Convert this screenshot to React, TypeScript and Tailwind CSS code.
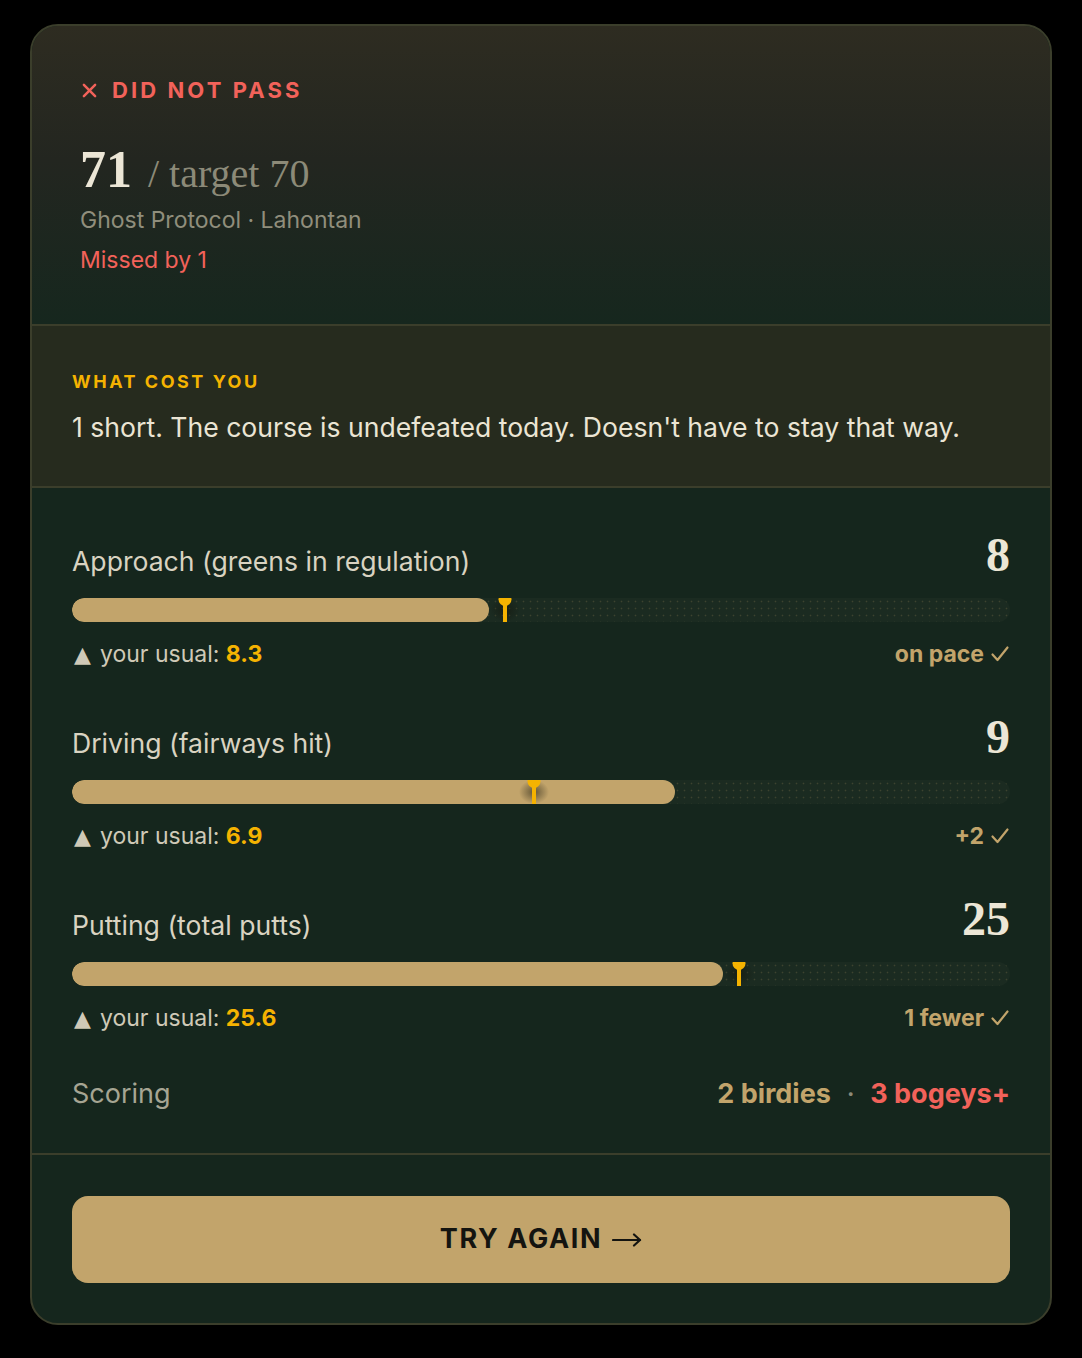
import React from "react";

const sans = { fontFamily: "Inter, 'Noto Sans', sans-serif" };
const serif = { fontFamily: "'Liberation Serif', 'DejaVu Serif', serif" };

function Check({ className = "" }: { className?: string }) {
  return (
    <svg viewBox="0 0 20 20" className={className} fill="none" stroke="currentColor" strokeWidth="2.2" strokeLinecap="round" strokeLinejoin="round">
      <polyline points="2.5,10.5 7.5,16 17.5,3.5" />
    </svg>
  );
}

type Stat = {
  label: string;
  value: number;
  max: number;
  usual: number;
  usualText: string;
  right: string;
};

const stats: Stat[] = [
  { label: "Approach (greens in regulation)", value: 8, max: 18, usual: 8.3, usualText: "8.3", right: "on pace" },
  { label: "Driving (fairways hit)", value: 9, max: 14, usual: 6.9, usualText: "6.9", right: "+2" },
  { label: "Putting (total putts)", value: 25, max: 36, usual: 25.6, usualText: "25.6", right: "1 fewer" },
];

function StatRow({ s }: { s: Stat }) {
  const fill = (s.value / s.max) * 100;
  const mark = (s.usual / s.max) * 100;
  return (
    <div className="flex flex-col">
      <div className="flex items-baseline justify-between h-[50px]">
        <span className="text-[26.6px] text-[#d9d3c1] leading-[36px]">{s.label}</span>
        <span className="text-[48px] leading-[50px] font-bold text-[#ece6d6]" style={serif}>{s.value}</span>
      </div>
      <div className="relative mt-[18px] h-[24px] rounded-full overflow-hidden bg-[#1b2b21] bg-[radial-gradient(circle,rgba(194,164,107,0.2)_0.7px,transparent_1.1px)] bg-[length:7px_7px]">
        <div className="absolute left-0 top-0 h-full rounded-full bg-[#c2a46b]" style={{ width: `${fill}%` }} />
        <div className="absolute top-0 h-full w-[14px] -ml-[7px]" style={{ left: `${mark}%` }}>
          <div className="absolute inset-y-0 -left-[8px] -right-[8px] bg-[radial-gradient(closest-side,rgba(20,20,10,0.55),transparent)]" />
          <div className="absolute left-1/2 -translate-x-1/2 -top-[5px] w-[13px] h-[13px] rounded-full bg-[#f5b301]" />
          <div className="absolute left-1/2 -translate-x-1/2 top-0 bottom-0 w-[4px] bg-[#f5b301]" />
        </div>
      </div>
      <div className="mt-[18px] h-[28px] flex items-center justify-between text-[23px]">
        <span className="flex items-center text-[#cfc9b7]">
          <span className="text-[22px] mr-[9px] ml-[2px]" style={{ fontFamily: "'DejaVu Sans', sans-serif" }}>▲</span>
          <span>your usual:&nbsp;<span className="font-bold text-[#f5b301]">{s.usualText}</span></span>
        </span>
        <span className="flex items-center gap-[6px] font-bold text-[#c2a46b]">
          {s.right}
          <Check className="w-[20px] h-[20px]" />
        </span>
      </div>
    </div>
  );
}

export default function App() {
  return (
    <div className="min-h-[1358px] w-full bg-black flex justify-center pt-[24px] pb-[33px]" style={sans}>
      <div className="w-[1022px] rounded-[28px] border-2 border-[#3b3e2b] overflow-hidden bg-[#15261d]">
        {/* header */}
        <div className="bg-[linear-gradient(180deg,#2e2c21_0%,#232620_45%,#16271e_100%)] pl-[48px] pt-[50px] pb-[49px]">
          <div className="h-[28px] flex items-center text-[22px] font-bold tracking-[0.14em] text-[#f2625a]">
            <svg viewBox="0 0 16 16" className="w-[15px] h-[15px] mr-[15px] ml-[2px]" fill="none" stroke="currentColor" strokeWidth="2.6" strokeLinecap="round">
              <line x1="2" y1="2" x2="14" y2="14" />
              <line x1="14" y1="2" x2="2" y2="14" />
            </svg>
            DID NOT PASS
          </div>
          <div className="mt-[38px] h-[56px] flex items-baseline" style={serif}>
            <span className="text-[52px] leading-[56px] font-bold text-[#ece6d6]">71</span>
            <span className="ml-[16px] text-[40px] text-[#8c8a78]">/ target 70</span>
          </div>
          <div className="mt-[7px] h-[30px] flex items-center text-[23px] text-[#908e7c]">Ghost Protocol · Lahontan</div>
          <div className="mt-[10px] h-[30px] flex items-center text-[23px] text-[#f2625a]">Missed by 1</div>
        </div>
        {/* what cost you */}
        <div className="border-y-2 border-[#3b3e2b] bg-[#262b1e] px-[40px] pt-[43px] pb-[40px]">
          <div className="h-[24px] flex items-center text-[18px] font-bold tracking-[0.14em] text-[#f5b301]">WHAT COST YOU</div>
          <div className="mt-[17px] h-[36px] flex items-center text-[26.6px] text-[#ebe5d4]">
            1 short. The course is undefeated today. Doesn't have to stay that way.
          </div>
        </div>
        {/* stats */}
        <div className="px-[40px] pt-[42px] pb-[41px] flex flex-col gap-[44px]">
          {stats.map((s) => (
            <StatRow key={s.label} s={s} />
          ))}
          <div className="h-[36px] flex items-center justify-between text-[27px]">
            <span className="text-[#a6a593]">Scoring</span>
            <span className="flex items-center font-bold">
              <span className="text-[#c2a46b]">2 birdies</span>
              <span className="mx-[16px] text-[#8c8a78] text-[22px]">·</span>
              <span className="text-[#f2625a]">3 bogeys+</span>
            </span>
          </div>
        </div>
        {/* footer */}
        <div className="border-t-2 border-[#3b3e2b] px-[40px] pt-[41px] pb-[40px]">
          <button className="w-full h-[87px] rounded-[16px] bg-[#c2a46b] text-[#141410] text-[27px] font-bold tracking-[0.06em] flex items-center justify-center">
            TRY AGAIN
            <svg viewBox="0 0 30 14" className="w-[30px] h-[14px] ml-[10px]" fill="none" stroke="currentColor" strokeWidth="2.2" strokeLinecap="round" strokeLinejoin="round">
              <line x1="1" y1="7" x2="28" y2="7" />
              <polyline points="22,1.5 28,7 22,12.5" />
            </svg>
          </button>
        </div>
      </div>
    </div>
  );
}
